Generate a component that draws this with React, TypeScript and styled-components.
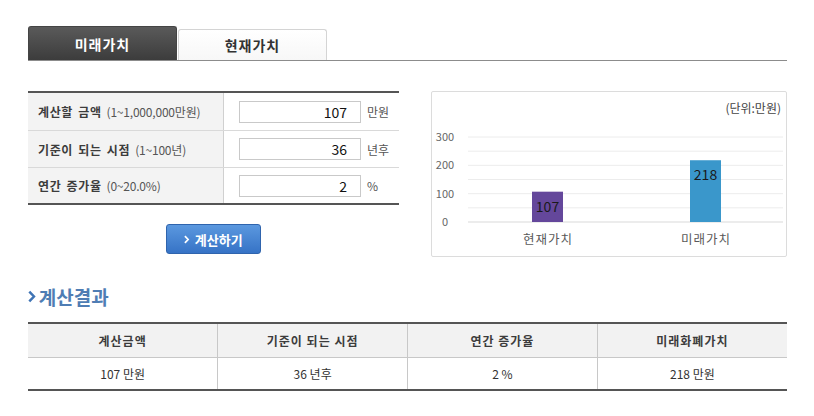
import React, { useState } from 'react';
import styled, { createGlobalStyle } from 'styled-components';

const FONT = `"Noto Sans CJK KR", "Noto Sans", "Liberation Sans", sans-serif`;

const TABS = ['미래가치', '현재가치'];

const FIELDS = [
  { label: '계산할 금액', range: '(1~1,000,000만원)', value: '107', unit: '만원' },
  { label: '기준이 되는 시점', range: '(1~100년)', value: '36', unit: '년후' },
  { label: '연간 증가율', range: '(0~20.0%)', value: '2', unit: '%' },
];

const RESULT_HEAD = ['계산금액', '기준이 되는 시점', '연간 증가율', '미래화폐가치'];
const RESULT_ROW = ['107 만원', '36 년후', '2 %', '218 만원'];

const BARS = [
  { name: '현재가치', value: 107, color: '#64479b', x: 100 },
  { name: '미래가치', value: 218, color: '#3a97cb', x: 258 },
];

const BASE_Y = 130;
const SCALE = 85 / 300;

function ChevronIcon({ size, color }: { size: number; color: string }) {
  return (
    <svg width={size * 0.6} height={size} viewBox="0 0 6 10" style={{ display: 'block' }}>
      <path d="M1 1.2 L4.6 5 L1 8.8" fill="none" stroke={color} strokeWidth="1.9" />
    </svg>
  );
}

export default function App() {
  const [currentTab, setCurrentTab] = useState(0);

  return (
    <Page>
      <GlobalStyle />
      <TabBar>
        {TABS.map((t, idx) => (
          <Tab key={t} isActive={idx === currentTab} onClick={() => setCurrentTab(idx)}>
            {t}
          </Tab>
        ))}
      </TabBar>

      <TopRow>
        <FormColumn>
          <FormTable>
            {FIELDS.map((f) => (
              <FormRow key={f.label}>
                <LabelCell>
                  <strong>{f.label}</strong>
                  <Range>{f.range}</Range>
                </LabelCell>
                <InputCell>
                  <NumberInput defaultValue={f.value} />
                  <Unit>{f.unit}</Unit>
                </InputCell>
              </FormRow>
            ))}
          </FormTable>
          <CalcButton>
            <ChevronIcon size={9} color="#fff" />
            계산하기
          </CalcButton>
        </FormColumn>

        <ChartBox>
          <UnitNote>(단위:만원)</UnitNote>
          <ChartSvg width="354" height="163" viewBox="0 0 354 163">
            {[0, 50, 100, 150, 200, 250, 300].map((v) => (
              <line
                key={v}
                x1="36"
                x2="351"
                y1={BASE_Y - v * SCALE}
                y2={BASE_Y - v * SCALE}
                stroke={v === 0 ? '#d9d9d9' : '#ececec'}
                strokeWidth="1"
              />
            ))}
            {[0, 100, 200, 300].map((v) => (
              <text key={v} x="13" y={BASE_Y - v * SCALE + 4} textAnchor="middle" fontSize="11" fill="#666">
                {v}
              </text>
            ))}
            {BARS.map((b) => {
              const h = b.value * SCALE;
              return (
                <g key={b.name}>
                  <rect x={b.x} y={BASE_Y - h} width="31" height={h} fill={b.color} />
                  <text x={b.x + 15.5} y={BASE_Y - h + 20} textAnchor="middle" fontSize="14" fill="#1a1a1a">
                    {b.value}
                  </text>
                  <text x={b.x + 16} y="152" textAnchor="middle" fontSize="12.5" fill="#595959" letterSpacing="1">
                    {b.name}
                  </text>
                </g>
              );
            })}
          </ChartSvg>
        </ChartBox>
      </TopRow>

      <SectionTitle>
        <ChevronIcon size={13} color="#3f74b5" />
        계산결과
      </SectionTitle>

      <ResultTable>
        <thead>
          <tr>
            {RESULT_HEAD.map((h) => (
              <HeadCell key={h}>{h}</HeadCell>
            ))}
          </tr>
        </thead>
        <tbody>
          <tr>
            {RESULT_ROW.map((c, idx) => (
              <DataCell key={idx}>{c}</DataCell>
            ))}
          </tr>
        </tbody>
      </ResultTable>
    </Page>
  );
}

const GlobalStyle = createGlobalStyle`
  body {
    margin: 0;
    background: #fff;
    font-family: ${FONT};
    color: #333;
  }
  * {
    box-sizing: border-box;
  }
`;

const Page = styled.div`
  width: 787px;
  padding: 26px 0 0 28px;
`;

const TabBar = styled.div`
  display: flex;
  align-items: flex-end;
  gap: 1px;
  border-bottom: 1px solid #8c8c8c;
  height: 35px;
`;

const Tab = styled.div<{ isActive: boolean }>`
  width: 149px;
  height: ${(p) => (p.isActive ? '34px' : '31px')};
  display: flex;
  align-items: center;
  justify-content: center;
  font-size: 14px;
  font-weight: bold;
  letter-spacing: 1px;
  cursor: pointer;
  border-radius: 3px 3px 0 0;
  color: ${(p) => (p.isActive ? '#fff' : '#333')};
  background: ${(p) => (p.isActive ? 'linear-gradient(#5a5a5a, #3c3c3c)' : 'linear-gradient(#fff, #f7f7f7)')};
  border: 1px solid ${(p) => (p.isActive ? '#444' : '#d4d4d4')};
  border-bottom: none;
`;

const TopRow = styled.div`
  display: flex;
  gap: 32px;
  margin-top: 30px;
  align-items: flex-start;
`;

const FormColumn = styled.div`
  width: 372px;
  display: flex;
  flex-direction: column;
  align-items: center;
`;

const FormTable = styled.div`
  width: 100%;
  border-top: 2px solid #555;
  border-bottom: 2px solid #555;
`;

const FormRow = styled.div`
  display: flex;
  height: 37px;

  & + & {
    border-top: 1px solid #d9d9d9;
  }
  &:last-child {
    height: 36px;
  }
`;

const LabelCell = styled.div`
  width: 196px;
  flex-shrink: 0;
  background: #f3f3f3;
  border-right: 1px solid #d0d0d0;
  display: flex;
  align-items: center;
  gap: 5px;
  padding-left: 10px;
  font-size: 12px;
  color: #444;
  white-space: nowrap;

  strong {
    font-weight: bold;
    color: #3c3c3c;
    letter-spacing: 0.6px;
    word-spacing: 2px;
  }
`;

const Range = styled.span`
  font-size: 12px;
  letter-spacing: -0.2px;
  color: #555;
`;

const InputCell = styled.div`
  flex: 1;
  display: flex;
  align-items: center;
  padding-left: 15px;
`;

const NumberInput = styled.input`
  width: 122px;
  height: 22px;
  flex-shrink: 0;
  border: 1px solid #c9c9c9;
  text-align: right;
  padding: 0 13px 0 0;
  font-family: ${FONT};
  font-size: 14px;
  color: #111;
  outline: none;
`;

const Unit = styled.span`
  margin-left: 6px;
  font-size: 12px;
  color: #555;
  white-space: nowrap;
`;

const CalcButton = styled.button`
  margin-top: 19px;
  width: 95px;
  height: 30px;
  border: 1px solid #2f64ad;
  border-radius: 3px;
  background: linear-gradient(#5b98df, #3673c6);
  color: #fff;
  font-family: ${FONT};
  font-size: 13px;
  font-weight: bold;
  display: flex;
  align-items: center;
  justify-content: center;
  gap: 5px;
  cursor: pointer;
`;

const ChartBox = styled.div`
  width: 357px;
  height: 166px;
  border: 1px solid #dcdcdc;
  border-radius: 2px;
  position: relative;
`;

const UnitNote = styled.div`
  position: absolute;
  top: 7px;
  right: 5px;
  font-size: 12px;
  color: #444;
`;

const ChartSvg = styled.svg`
  display: block;
  font-family: ${FONT};
`;

const SectionTitle = styled.h2`
  margin: 24px 0 0;
  height: 30px;
  display: flex;
  align-items: center;
  gap: 3px;
  font-size: 19px;
  font-weight: bold;
  color: #4f7db4;
`;

const ResultTable = styled.table`
  margin-top: 11px;
  width: 100%;
  border-collapse: collapse;
  table-layout: fixed;
  border-top: 2px solid #555;
  border-bottom: 2px solid #555;
  font-size: 12px;
`;

const HeadCell = styled.th`
  height: 34px;
  padding: 0;
  background: #f2f2f2;
  font-weight: bold;
  color: #3c3c3c;
  letter-spacing: 1px;
  border-bottom: 1px solid #c8c8c8;

  & + & {
    border-left: 1px solid #c8c8c8;
  }
`;

const DataCell = styled.td`
  height: 33px;
  padding: 0;
  text-align: center;
  color: #333;

  & + & {
    border-left: 1px solid #c8c8c8;
  }
`;
